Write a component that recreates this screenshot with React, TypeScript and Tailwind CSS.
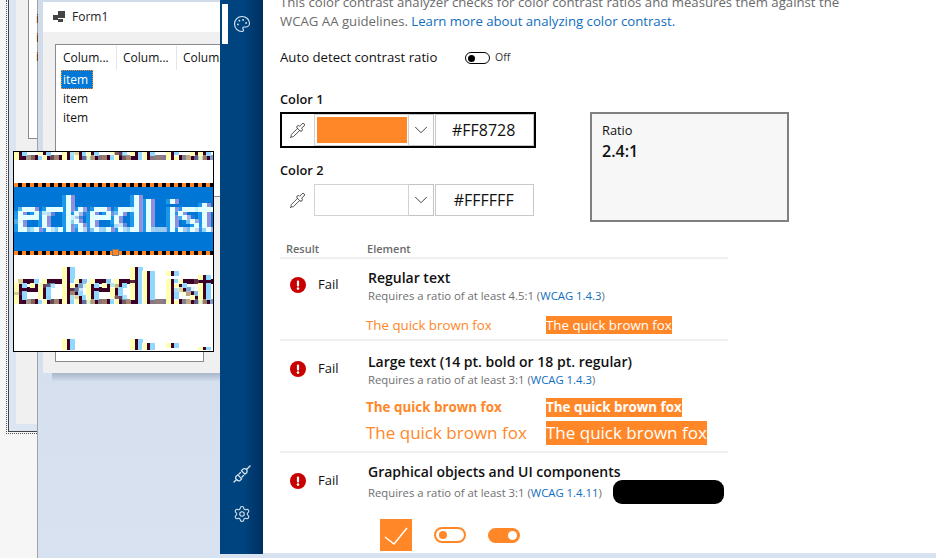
import { ChevronDown, Palette, Pipette, Settings } from "lucide-react";

const darkFringe = "[text-shadow:-4px_0_#ffffb0,4px_0_#90d8ff]";
const blueFringe = "[text-shadow:-4px_0_#1c98ea,4px_0_#8f8fdc]";

function MagText({ className, top }: { className: string; top: string }) {
  return (
    <div className={`w-[199px] overflow-hidden whitespace-nowrap text-[48px] leading-[64px] tracking-[-0.8px] [filter:url(#pix)] ${top} ${className}`}>
      eckedList
    </div>
  );
}

function Magnifier() {
  const dashes = "h-[4px] bg-[repeating-linear-gradient(90deg,#ff8728_0_4px,#000_4px_8px)]";
  return (
    <div className="absolute left-[13px] top-[151px] h-[201px] w-[201px] border border-black bg-white">
      <div className="h-[31px] overflow-hidden">
        <MagText top="-mt-[41px]" className={`text-[#3c0028] ${darkFringe}`} />
      </div>
      <div className={dashes} />
      <div className="h-[64px] overflow-hidden bg-[#0076d6]">
        <MagText top="-mt-[4px]" className={`text-[#e4ffff] ${blueFringe}`} />
      </div>
      <div className={`${dashes} relative`}>
        <div className="absolute left-[98px] top-[-2px] h-[7px] w-[7px] border border-[#777] bg-[#ff8728]" />
      </div>
      <div className="h-[95px] overflow-hidden">
        <MagText top="" className={`text-[#3c0028] ${darkFringe}`} />
        <MagText top="mt-[8px]" className={`text-[#3c0028] ${darkFringe}`} />
      </div>
    </div>
  );
}

function Designer() {
  return (
    <div className="relative flex h-full w-[220px] shrink-0 overflow-hidden">
      <div className="h-full w-[38px] shrink-0 border-r border-[#a2a2a2] bg-[#f6f6f6]">
        <div className="ml-[6px] h-[434px] border-b border-l border-dotted border-[#555] pb-px pl-px">
          <div className="h-full border-b border-l border-[#444] bg-[#dbe6f2] pb-[7px] pl-[7px]">
            <div className="h-full bg-[#f0f0f0] pl-[12px]">
              <div className="flex h-[139px] flex-col items-start gap-[6px] border-b border-l border-[#8a8a90] bg-white pl-[7px] pt-[12px] text-[12px] leading-[13px] text-[#4a2a20]">
                <span>i</span>
                <span>i</span>
                <span>i</span>
              </div>
            </div>
          </div>
        </div>
      </div>
      <div className="flex-1 bg-linear-to-b from-[#d0dbea] to-[#d8e2f0] pl-[5px] pt-[2px]">
        <div className="h-[371px] w-[177px] bg-[#f0f0f0]">
          <div className="flex h-[30px] items-center bg-white pl-[10px] text-[12px] text-[#222]">
            <svg width="13" height="12" viewBox="0 0 13 12" className="mr-[6px]">
              <rect x="0" y="4" width="5" height="5" fill="#444" />
              <rect x="5" y="0" width="7" height="7" fill="#444" />
              <rect x="5" y="8" width="5" height="3" fill="#444" />
            </svg>
            Form1
          </div>
          <div className="ml-[12px] mt-[12px]">
            <div className="h-[153px] w-[165px] border-b border-l border-t border-[#8a8a90] bg-white text-[12px] leading-[19px] text-[#111]">
              <div className="flex h-[25px] items-center">
                <div className="h-[24px] w-[61px] shrink-0 border-r border-[#e5e5e5] pl-[7px] leading-[24px]">Colum...</div>
                <div className="h-[24px] w-[60px] shrink-0 border-r border-[#e5e5e5] pl-[6px] leading-[24px]">Colum...</div>
                <div className="h-[24px] w-[43px] shrink-0 whitespace-nowrap pl-[6px] leading-[24px]">Colum</div>
              </div>
              <div className="ml-[5px] h-[19px] w-[32px] border border-dotted border-[#ff8728] bg-[#0078d7] pl-px leading-[17px] text-white">item</div>
              <div className="pl-[7px]">item</div>
              <div className="pl-[7px]">item</div>
            </div>
            <div className="h-[165px] w-[149px] border-b border-l border-r border-[#8a8a90] bg-white" />
          </div>
        </div>
        <div className="ml-[9px] h-[8px] bg-linear-to-b from-[#a9b7cb] to-[#d0dbea]" />
      </div>
      <Magnifier />
    </div>
  );
}

function Sidebar() {
  return (
    <div className="flex h-[554px] w-[43px] shrink-0 flex-col bg-linear-to-r from-[#00447f] from-55% to-[#002f5f] text-[#dbe4ee]">
      <div className="relative mt-[4px] flex h-[40px] items-center justify-center">
        <div className="absolute left-[2px] top-0 h-[40px] w-[6px] bg-white" />
        <Palette size={18} strokeWidth={1.5} />
      </div>
      <div className="mt-auto flex h-[40px] items-center justify-center">
        <svg width="18" height="18" viewBox="0 0 18 18" fill="none" stroke="currentColor" strokeWidth="1.3" strokeLinecap="round">
          <path d="M1 17l2.500-2.500M3.500 14.500c-1.500-1.500-1-3 .5-4l.8-.6 3.800 3.800-.6.8c-1 1.500-2.500 2-4.500 0z" />
          <path d="M6 9l1.500-1.500M9 12l1.500-1.500" />
          <path d="M8.500 5.800l.9-1.200c1-1.300 3-1.400 4-.3s.9 3-.3 4l-1.200.9z" />
          <path d="M13.500 4.500L17 1" />
        </svg>
      </div>
      <div className="mb-[20px] flex h-[40px] items-center justify-center">
        <Settings size={18} strokeWidth={1.4} />
      </div>
    </div>
  );
}

function ColorRow({ value, framed, swatch }: { value: string; framed: boolean; swatch: boolean }) {
  return (
    <div className={`flex h-[36px] w-[256px] items-stretch border-2 ${framed ? "border-black" : "border-transparent"}`}>
      <div className="flex w-[32px] items-center justify-center text-[#222]">
        <Pipette size={17} strokeWidth={1.1} />
      </div>
      <div className={`flex w-[95px] items-center border border-[#d2d2d2] ${swatch ? "py-[2px] pl-[2px] pr-px" : ""}`}>
        {swatch && <div className="h-[26px] w-full bg-[#ff8728]" />}
      </div>
      <div className="flex w-[26px] items-center justify-center border border-l-0 border-[#c4c4c4] text-[#333]">
        <ChevronDown size={22} strokeWidth={1} />
      </div>
      <div className="ml-px flex w-[99px] items-center justify-center border border-[#c8c8c8] pr-[2px] text-[16px] text-[#111]">{value}</div>
    </div>
  );
}

function FailCell({ mt }: { mt: string }) {
  return (
    <div className={`flex w-[88px] shrink-0 items-center pl-[10px] ${mt}`}>
      <svg width="16" height="16" viewBox="0 0 16 16" className="shrink-0">
        <circle cx="8" cy="8" r="8" fill="#c80000" />
        <rect x="6.900" y="3.500" width="2.200" height="6" rx="1" fill="#fff" />
        <circle cx="8" cy="11.600" r="1.300" fill="#fff" />
      </svg>
      <span className="ml-[12px] text-[13px] text-[#111]">Fail</span>
    </div>
  );
}

function Sub({ wcag }: { wcag: string }) {
  return (
    <span className="text-[11.300px] leading-[16px] text-[#6f6f6f]">
      Requires a ratio of at least {wcag === "1.4.3a" ? "4.5:1" : "3:1"} (<span className="text-[#106ebe]">WCAG {wcag.replace("a", "")}</span>)
    </span>
  );
}

function Main() {
  return (
    <div className="relative h-[553px] flex-1 overflow-hidden bg-white pl-[17px] text-[13.200px] text-[#111]">
      <div className="-mt-[7px] h-[38px] w-[600px] whitespace-nowrap leading-[19px] text-[#6b6b6b]">
        <div>This color contrast analyzer checks for color contrast ratios and measures them against the</div>
        <div>
          WCAG AA guidelines. <span className="text-[#106ebe]">Learn more about analyzing color contrast.</span>
        </div>
      </div>
      <div className="mt-[17px] flex h-[20px] items-center">
        <span className="w-[185px]">Auto detect contrast ratio</span>
        <div className="flex h-[12px] w-[25px] items-center rounded-full border border-black bg-white pl-[2px]">
          <div className="h-[7px] w-[7px] rounded-full bg-black" />
        </div>
        <span className="ml-[5px] text-[10.500px] text-[#333]">Off</span>
      </div>
      <div className="mt-[22px] flex">
        <div>
          <div className="h-[18px] text-[12.800px] font-semibold leading-[18px]">Color 1</div>
          <div className="mt-[4px]">
            <ColorRow value="#FF8728" framed swatch />
          </div>
          <div className="mt-[13px] h-[18px] text-[12.800px] font-semibold leading-[18px]">Color 2</div>
          <div className="mt-[3px]">
            <ColorRow value="#FFFFFF" framed={false} swatch={false} />
          </div>
        </div>
        <div className="ml-[54px] mt-[22px] h-[110px] w-[199px] border-2 border-[#808080] bg-[#f7f7f7] pl-[10px] pt-[7px]">
          <div className="text-[12.800px] leading-[18px]">Ratio</div>
          <div className="mt-[1px] text-[16px] font-semibold leading-[22px]">2.4:1</div>
        </div>
      </div>
      <div className="mt-[17px] flex h-[20px] w-[448px] items-center border-b-2 border-[#f0f0f0] pl-[6px] pt-[2px] text-[11px] font-semibold text-[#6b6b6b]">
        <span className="w-[81px]">Result</span>
        <span>Element</span>
      </div>
      <div className="flex h-[82px] w-[448px] border-b-2 border-[#f0f0f0]">
        <FailCell mt="mt-[16px] self-start" />
        <div className="pt-[9px]">
          <div className="h-[19px] text-[14px] font-semibold leading-[19px]">Regular text</div>
          <div className="h-[16px] leading-[16px]"><Sub wcag="1.4.3a" /></div>
          <div className="-ml-[2px] mt-[13px] flex h-[18px] items-center text-[13.300px] leading-[18px] text-[#ff8728]">
            <span className="w-[180px]">The quick brown fox</span>
            <span className="bg-[#ff8728] text-white">The quick brown fox</span>
          </div>
        </div>
      </div>
      <div className="flex h-[112px] w-[448px] border-b-2 border-[#f0f0f0]">
        <FailCell mt="mt-[18px] self-start" />
        <div className="pt-[11px]">
          <div className="h-[19px] whitespace-nowrap text-[14px] font-semibold leading-[19px]">Large text (14 pt. bold or 18 pt. regular)</div>
          <div className="h-[16px] leading-[16px]"><Sub wcag="1.4.3" /></div>
          <div className="-ml-[2px] mt-[11px] flex h-[19px] items-center text-[13.400px] font-bold leading-[19px] text-[#ff8728]">
            <span className="w-[180px]">The quick brown fox</span>
            <span className="bg-[#ff8728] text-white">The quick brown fox</span>
          </div>
          <div className="-ml-[2px] mt-[4px] flex h-[24px] items-center whitespace-nowrap text-[17px] leading-[24px] text-[#ff8728]">
            <span className="w-[180px]">The quick brown fox</span>
            <span className="bg-[#ff8728] text-white">The quick brown fox</span>
          </div>
        </div>
      </div>
      <div className="flex h-[100px] w-[448px]">
        <FailCell mt="mt-[18px] self-start" />
        <div className="pt-[9px]">
          <div className="h-[19px] text-[14px] font-semibold leading-[19px]">Graphical objects and UI components</div>
          <div className="mt-[3px] h-[16px] leading-[16px]"><Sub wcag="1.4.11" /></div>
          <div className="ml-[12px] mt-[19px] flex items-center">
            <div className="h-[32px] w-[32px] bg-[#ff8728]">
              <svg width="32" height="32" viewBox="0 0 32 32" fill="none" stroke="#fff" strokeWidth="1.500">
                <path d="M5 18l9 7L27 9" />
              </svg>
            </div>
            <div className="ml-[22px] flex h-[16px] w-[32px] items-center rounded-full border-2 border-[#ff8728] bg-white pl-[3px]">
              <div className="h-[8px] w-[8px] rounded-full bg-[#ff8728]" />
            </div>
            <div className="ml-[22px] flex h-[15px] w-[32px] items-center justify-end rounded-full bg-[#ff8728] pr-[3px]">
              <div className="h-[9px] w-[9px] rounded-full bg-white" />
            </div>
          </div>
        </div>
      </div>
      <div className="absolute left-[350px] top-[480px] h-[24px] w-[111px] rounded-[9px] bg-black" />
    </div>
  );
}

export default function App() {
  return (
    <div className="flex h-[558px] w-[936px] items-start overflow-hidden bg-[#d8e2f0] font-['Open_Sans',sans-serif]">
      <svg className="absolute h-0 w-0">
        <filter id="pix" x="0" y="0" width="100%" height="100%" colorInterpolationFilters="sRGB" primitiveUnits="userSpaceOnUse">
          <feFlood x="2" y="2" width="1" height="1" floodColor="#000" />
          <feComposite width="4" height="4" />
          <feTile result="grid" />
          <feComposite in="SourceGraphic" in2="grid" operator="in" />
          <feMorphology operator="dilate" radius="2" />
        </filter>
      </svg>
      <Designer />
      <Sidebar />
      <Main />
    </div>
  );
}
